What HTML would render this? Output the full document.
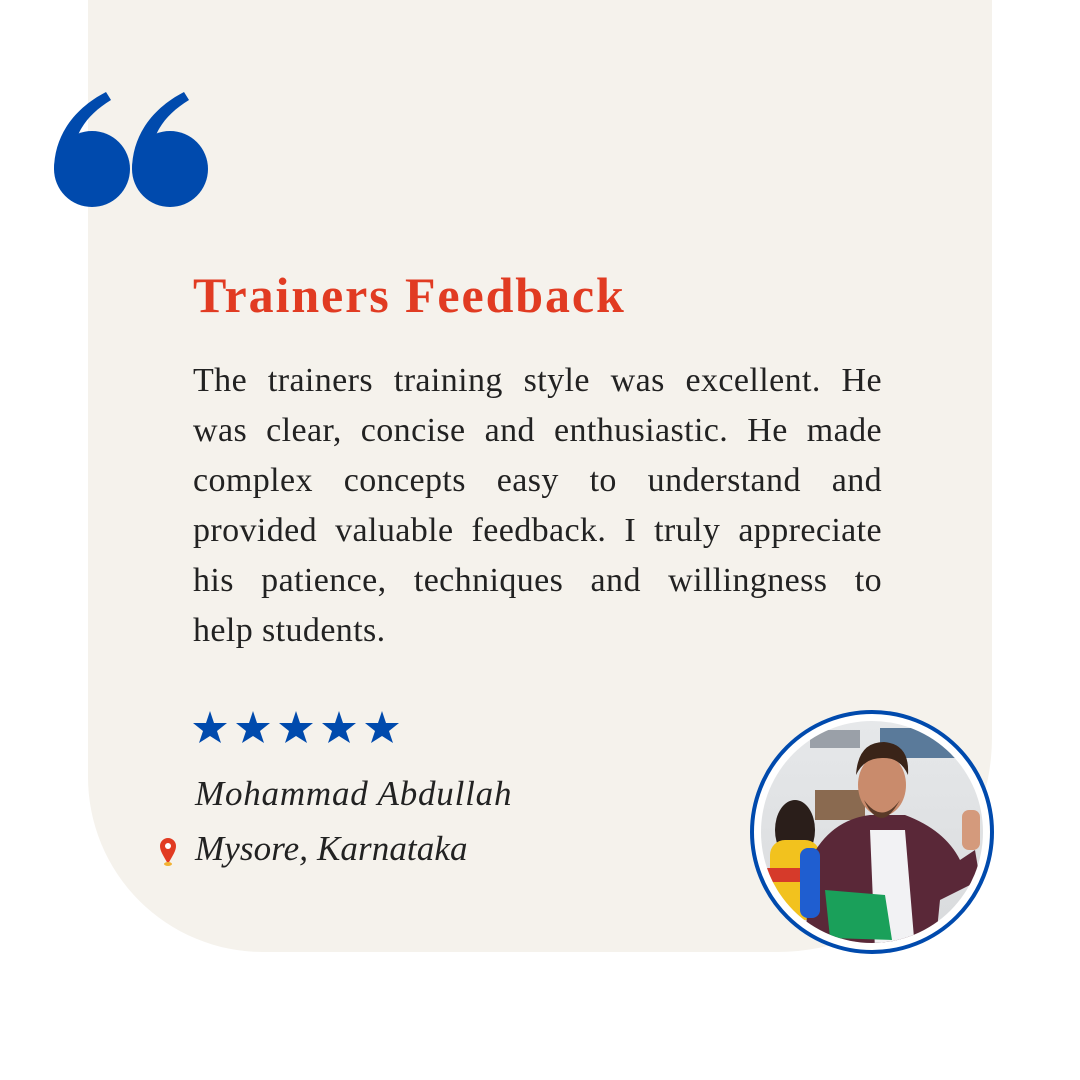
<!DOCTYPE html>
<html><head><meta charset="utf-8"><style>
html,body{margin:0;padding:0;background:#fff;}
body{width:1080px;height:1080px;position:relative;overflow:hidden;font-family:"Liberation Serif",serif;}
.card{position:absolute;left:88px;top:0;width:904px;height:952px;background:#f5f2ec;border-radius:0 0 215px 175px;}
.title{position:absolute;left:193px;top:266px;font-size:50px;letter-spacing:1.9px;font-weight:bold;color:#e13b22;white-space:nowrap;}
.body{position:absolute;left:193px;top:356px;width:689px;font-size:34px;letter-spacing:0.4px;line-height:50px;color:#222;}
.body div{text-align:justify;text-align-last:justify;white-space:nowrap;height:50px;}
.body div.l{text-align-last:left;}
.name{position:absolute;left:195px;top:774px;font-size:35px;letter-spacing:0.8px;font-style:italic;color:#222;white-space:nowrap;}
.loc{position:absolute;left:195px;top:829px;font-size:35px;letter-spacing:0.1px;font-style:italic;color:#222;white-space:nowrap;}
</style></head><body>
<div class="card"></div>
<svg style="position:absolute;left:0;top:0" width="1080" height="1080">
<g fill="#004aad">
<circle cx="92" cy="169" r="38"/>
<path d="M54 170 C54 135 75 108 106 92 L111 100 C90 113 78 128 74 148 Z"/>
<circle cx="170" cy="169" r="38"/>
<path d="M132 170 C132 135 153 108 184 92 L189 100 C168 113 156 128 152 148 Z"/>
</g>
<g fill="#004aad">
<path id="st" d="M210 711 L214 723 L227 723 L217 731 L221 743 L210 736 L199 743 L203 731 L193 723 L206 723 Z"/>
<use href="#st" x="43"/><use href="#st" x="86"/><use href="#st" x="129"/><use href="#st" x="172"/>
</g>
<path d="M168 864 C163 855 160 851 160 846 A8 8 0 0 1 176 846 C176 851 173 855 168 864 Z" fill="#e13b22"/>
<circle cx="168" cy="846" r="3" fill="#fff"/>
<ellipse cx="168" cy="864" rx="4" ry="2" fill="#f2b233"/>
<defs><clipPath id="cp"><circle cx="872" cy="832" r="111"/></clipPath>
<linearGradient id="bg" x1="0" y1="0" x2="0" y2="1"><stop offset="0" stop-color="#e6e8ea"/><stop offset="1" stop-color="#d8dadc"/></linearGradient></defs>
<circle cx="872" cy="832" r="120" fill="#fff" stroke="#004aad" stroke-width="4"/>
<g clip-path="url(#cp)">
<rect x="760" y="720" width="230" height="230" fill="url(#bg)"/>
<rect x="810" y="730" width="50" height="18" fill="#9aa0a8"/>
<rect x="880" y="728" width="80" height="30" fill="#5a7a9a"/>
<rect x="815" y="790" width="50" height="30" fill="#8a6a50"/>
<ellipse cx="795" cy="830" rx="20" ry="30" fill="#2a1e1a"/>
<rect x="770" y="840" width="50" height="80" rx="15" fill="#f2c21e"/>
<rect x="765" y="868" width="40" height="14" fill="#d63a2a"/>
<path d="M805 950 L810 860 Q830 820 870 815 L905 815 Q945 830 960 860 L975 850 L980 880 L940 900 L935 950 Z" fill="#5a2838"/>
<path d="M870 830 L905 830 L915 950 L875 950 Z" fill="#f2f2f4"/>
<rect x="800" y="848" width="20" height="70" rx="8" fill="#1f5ed0"/>
<path d="M825 890 L885 895 L892 940 L830 938 Z" fill="#1aa05a"/>
<ellipse cx="882" cy="785" rx="24" ry="31" fill="#c98b6c"/>
<path d="M856 775 Q858 742 884 742 Q910 744 908 775 Q900 757 882 758 Q864 758 856 775Z" fill="#3a2418"/>
<path d="M864 800 Q882 825 900 800 Q890 818 882 818 Q872 818 864 800Z" fill="#5a3a28"/>
<rect x="962" y="810" width="18" height="40" rx="7" fill="#d49a7c"/>
</g>
</svg>
<div class="title">Trainers Feedback</div>
<div class="body">
<div>The trainers training style was excellent. He</div>
<div>was clear, concise and enthusiastic. He made</div>
<div>complex concepts easy to understand and</div>
<div>provided valuable feedback. I truly appreciate</div>
<div>his patience, techniques and willingness to</div>
<div class="l">help students.</div>
</div>
<div class="name">Mohammad Abdullah</div>
<div class="loc">Mysore, Karnataka</div>
</body></html>
